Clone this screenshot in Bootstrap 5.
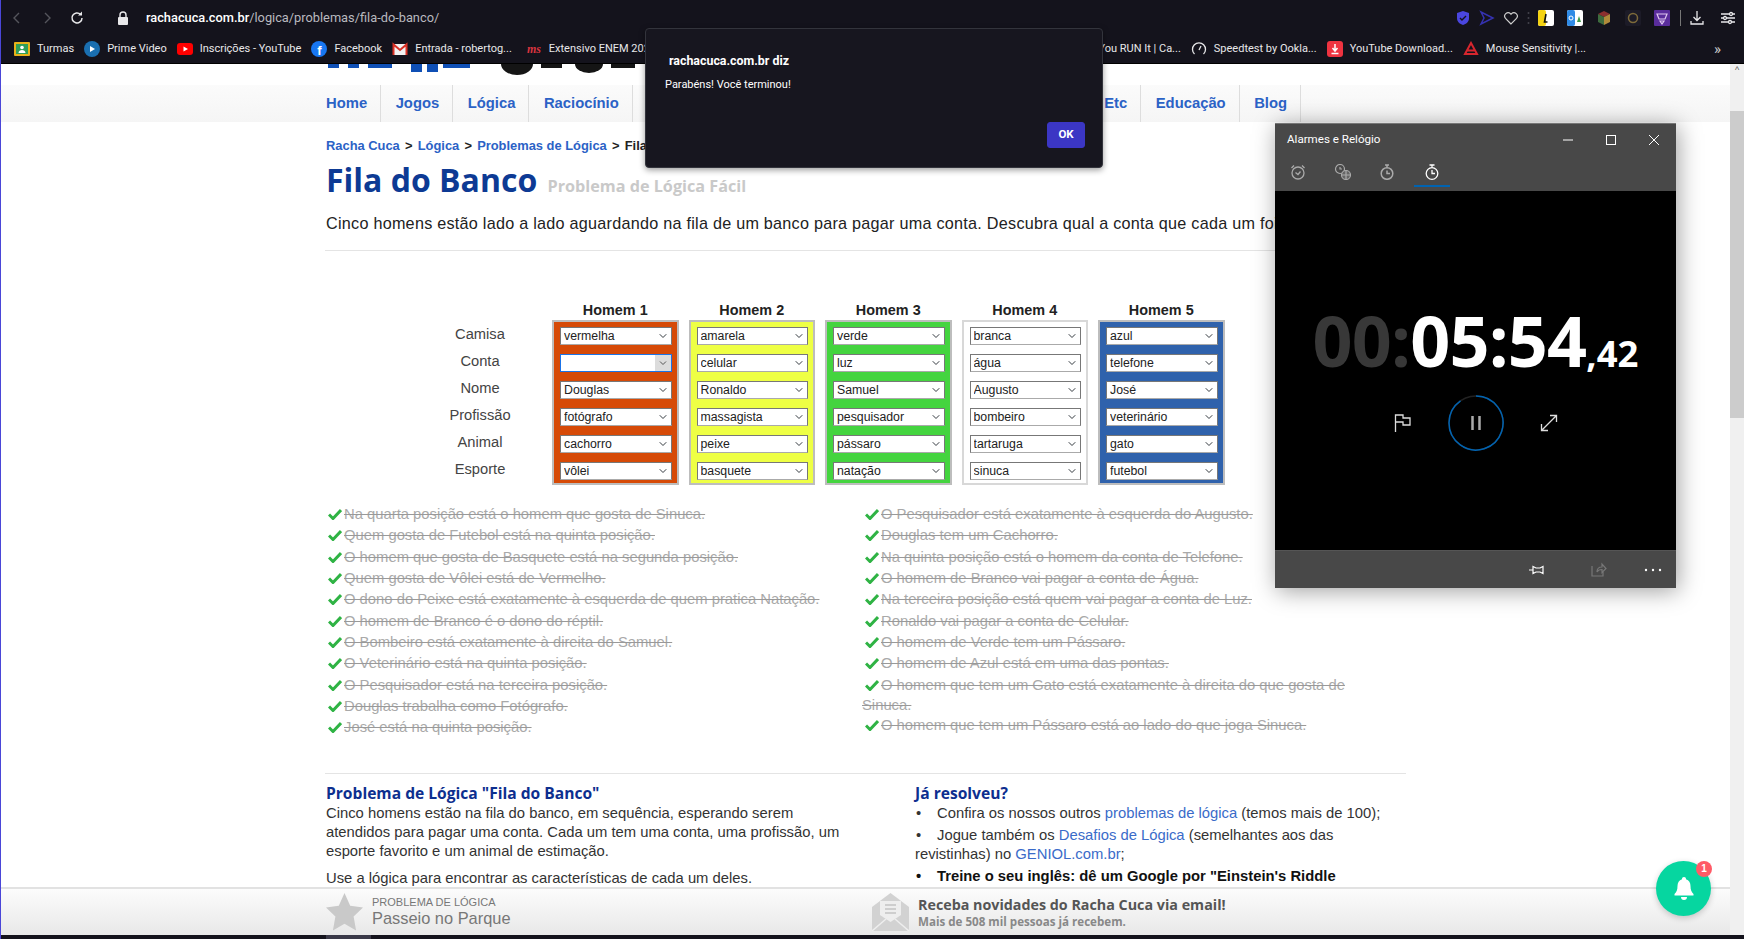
<!DOCTYPE html>
<html lang="pt-BR">
<head>
  <title>Fila do Banco</title>
  <link rel="stylesheet" href="https://cdn.jsdelivr.net/npm/bootstrap@5.3.0/dist/css/bootstrap.min.css">
  <style>
    html, body { height: 939px; overflow: hidden; }
    body { background: #14131c; font-family: "Liberation Sans", Arial, sans-serif; color: #222; border-left: 1px solid #4a46d8; position: relative; }

    /* browser chrome */
    .chrome { height: 64px; background: #14131c; color: #e8e8ea; font-family: Roboto, sans-serif; border-bottom: 1px solid #000; }
    .tool-row { height: 35px; padding-left: 8px; }
    .tool-ico { width: 16px; height: 16px; flex: none; }
    .tool-gap { margin-left: 14px; }
    .url-text { font-size: 12.8px; margin-left: 15px; color: #b9b9bf; }
    .url-text b { font-weight: 500; color: #fff; }
    .ext-group { margin-left: auto; padding-right: 8px; gap: 8px; }
    .ext-wide { margin-left: 5px; }
    .ext-sep { width: 1px; height: 16px; margin-left: 2px; background: #777; }
    .ext-end { margin-left: 7px; }
    .book-row { height: 28px; font-size: 11px; padding-left: 13px; padding-right: 23px; }
    .book-item { display: flex; align-items: center; gap: 7px; margin-right: 10px; white-space: nowrap; }
    .book-more { margin-left: 118px; font-size: 15px; color: #ccc; }

    /* page */
    .view-wrap { height: 871px; background: #fff; }
    .page-col { flex: 1; min-width: 0; display: flex; flex-direction: column; }
    .page-scroll { flex: 1; overflow: hidden; min-height: 0; }
    .logo-clip { height: 21px; padding-left: 324px; }
    .site-nav { height: 37px; padding-left: 324px; background: linear-gradient(#fbfbfb, #f5f5f5); }
    .site-nav .nav-link { padding: 0 13px 0 14.5px; height: 37px; line-height: 37px; font-size: 14.8px; font-weight: 700; color: #2b62c6; border-right: 1px solid #ddd; }
    .site-nav li:first-child .nav-link { padding-left: 1px; }
    .nav-spacer { width: 457px; height: 37px; border-right: 1px solid #ddd; }
    .site-wrap { margin-left: 324px; width: 1081px; }
    .crumbs { margin-top: 14px; height: 20px; line-height: 20px; font-size: 12.9px; font-weight: 700; padding-left: 1px; }
    .crumbs a { color: #2b62c6; text-decoration: none; }
    .crumbs span { margin: 0 1.6px; }
    .page-title { margin: 2px 0 0; height: 44px; line-height: 44px; font-family: "Open Sans", sans-serif; font-weight: 700; font-size: 32px; color: #0d3a94; padding-left: 1px; }
    .page-title span { font-size: 16.2px; color: #c9c9c9; margin-left: 2px; }
    .intro { margin: 9px 0 15px; line-height: 24px; font-size: 16.2px; letter-spacing: .25px; white-space: nowrap; padding-left: 1px; color: #222; overflow: hidden; }
    .rule { height: 1px; background: #e4e4e4; }

    .puzzle { margin-top: 49px; margin-left: 105px; gap: 10px; }
    .label-col { width: 100px; padding-top: 25px; margin-right: 12px; gap: 9px; }
    .label-col div { height: 18px; line-height: 18px; text-align: center; font-size: 14.7px; color: #444; }
    .man-col { width: 126.5px; }
    .man-head { height: 20px; line-height: 20px; text-align: center; font-size: 14.4px; font-weight: 700; color: #222; }
    .man-box { height: 165px; border: 2px solid #bdbdbd; padding: 5px 5px 5px 6px; gap: 9px; }
    .shirt-red { background: #d64a07; }
    .shirt-yellow { background: #eeff44; }
    .shirt-green { background: #44d43f; }
    .shirt-white { background: #fff; border-color: #d8d8d8; }
    .shirt-blue { background: #2f62ac; }
    .pick { height: 18px; min-height: 18px; padding: 0 14px 0 3px; font-size: 12.3px; line-height: 15px; color: #222; border: 1px solid #777; border-bottom-color: #aaa; border-radius: 0; background-position: right 3px center; background-size: 10px 8px; font-family: "Liberation Sans", Arial, sans-serif; }
    .pick-open { border: 1px solid #1a73e8; background: url("data:image/svg+xml,%3csvg xmlns='http://www.w3.org/2000/svg' viewBox='0 0 16 16'%3e%3cpath fill='none' stroke='%23555' stroke-width='2' d='m2 5 6 6 6-6'/%3e%3c/svg%3e") right 3px center / 10px 8px no-repeat, linear-gradient(#dcdcdc, #dcdcdc) right / 16px 100% no-repeat, #fff; }

    .clues { margin-top: 19px; }
    .clue-col { font-size: 14.8px; line-height: 21.33px; color: #a9a9a9; }
    .clue-left { width: 537px; }
    .clue-right { width: 500px; }
    .clue-col div { text-decoration: line-through; text-decoration-color: #999; }
    .clue-col .clue-wrap { line-height: 20px; }
    .tick { width: 14px; height: 12px; margin: 0 2px 0 3px; vertical-align: -1px; }

    .rule-low { margin-top: 34px; }
    .info-row { margin-top: 9px; }
    .info-left { width: 525px; margin-right: 65px; padding-left: 1px; }
    .info-right { width: 491px; }
    .info-head { margin: 0; height: 21px; line-height: 20px; font-family: "Open Sans", sans-serif; font-weight: 700; font-size: 15.6px; color: #0d2f8f; }
    .info-text { font-size: 14.8px; line-height: 19px; color: #333; margin: 0 0 8px; }
    .info-list { margin: 0; padding: 0; list-style: none; font-size: 14.8px; line-height: 19px; color: #333; }
    .info-list li { margin-bottom: 3px; }
    .info-list a { color: #3a6bc9; text-decoration: none; }
    .info-list i { font-style: normal; display: inline-block; width: 22px; padding-left: 1px; }
    .info-list .strong-tip { font-weight: 700; color: #111; }

    /* bottom bar */
    .promo-bar { height: 48px; flex: none; border-top: 2px solid #e2e2e2; background: linear-gradient(#fcfcfc, #e8e8e8); padding-left: 325px; color: #777; }
    .promo-one { width: 546px; gap: 9px; }
    .promo-small { font-size: 11px; line-height: 13px; color: #777; }
    .promo-big { font-size: 16.4px; line-height: 19px; color: #777; }
    .promo-two { gap: 9px; font-family: "Open Sans", sans-serif; font-weight: 700; }
    .promo-title { font-size: 14.3px; line-height: 19px; color: #555; }
    .promo-sub { font-size: 11.6px; line-height: 16px; color: #888; }
    .rail { width: 14px; flex: none; background: #f0f0f0; }
    .rail-top { height: 47px; font-size: 9px; text-align: center; color: #555; }
    .rail-thumb { height: 307px; background: #ccc; }
    .strip { height: 4px; background: #14131c; padding-left: 325px; }
    .strip div { width: 45px; height: 4px; background: #3a3948; }

    /* alert dialog */
    .js-alert { position: absolute; left: 644px; top: 28px; width: 458px; height: 140px; background: #17161f; border: 1px solid #33343c; border-radius: 4px; color: #fff; font-family: Roboto, sans-serif; box-shadow: 0 2px 6px rgba(0,0,0,.4); }
    .js-alert h6 { position: absolute; left: 23px; top: 25px; margin: 0; font-size: 12.4px; font-weight: 700; }
    .js-alert p { position: absolute; left: 19px; top: 48px; margin: 0; font-size: 11px; }
    .ok-btn { position: absolute; left: 401px; top: 93px; width: 38px; height: 26px; padding: 0; background: #3b36c4; border-color: #3b36c4; color: #fff; font-size: 11.5px; font-weight: 700; border-radius: 3px; }

    /* clock window */
    .clock-win { position: absolute; left: 1274px; top: 123px; width: 401px; height: 465px; background: #484848; box-shadow: 2px 3px 22px rgba(0,0,0,.38); border-top: 1px solid #777; color: #fff; }
    .clock-title { height: 32px; padding-left: 12px; font-family: Roboto, sans-serif; font-size: 11.6px; }
    .win-btns { margin-left: auto; gap: 31px; padding-right: 16px; }
    .clock-tabs { height: 35px; padding-left: 1px; }
    .clock-tab { width: 44.5px; height: 31px; text-align: center; padding-top: 8px; line-height: 0; }
    .clock-tab.is-on { width: 36px; margin-left: 4px; border-bottom: 2px solid #0063b1; }
    .clock-body { height: 359px; background: #000; padding-top: 119px; }
    .clock-time { height: 60px; line-height: 60px; text-align: center; font-family: "Open Sans", sans-serif; font-weight: 700; font-size: 70px; letter-spacing: -.8px; white-space: nowrap; }
    .clock-time .dim { color: #383838; }
    .clock-time small { font-size: 36.5px; letter-spacing: 0; }
    .clock-ctrls { margin-top: 25px; gap: 36px; }
    .clock-foot { height: 38px; border-top: 1px solid #555; gap: 37px; padding-right: 14px; }
    .pin-ico { margin-right: 9px; }

    /* notification bell */
    .bell-fab { position: absolute; left: 1655px; top: 861px; width: 55px; height: 55px; border-radius: 50%; background: #06d6a0; box-shadow: 0 2px 6px rgba(0,0,0,.2); }
    .bell-count { position: absolute; right: -1px; top: 0; width: 16px; height: 16px; line-height: 16px; border-radius: 50%; background: #ff5a66; color: #fff; font-size: 10px; font-weight: 700; text-align: center; }
  </style>
</head>
<body>

  <!-- browser toolbar -->
  <div class="chrome">
    <div class="tool-row d-flex align-items-center">
      <svg class="tool-ico" viewBox="0 0 16 16" fill="none" stroke="#55555c" stroke-width="1.4"><path d="M10 3 5 8l5 5"/></svg>
      <svg class="tool-ico tool-gap" viewBox="0 0 16 16" fill="none" stroke="#55555c" stroke-width="1.4"><path d="m6 3 5 5-5 5"/></svg>
      <svg class="tool-ico tool-gap" viewBox="0 0 16 16" fill="none" stroke="#e8e8ea" stroke-width="1.5"><path d="M13 8a5 5 0 1 1-1.5-3.6"/><path d="M13 1.5v4h-4" fill="#e8e8ea" stroke="none"/></svg>
      <svg class="tool-ico" style="margin-left:30px" viewBox="0 0 16 16" fill="#e8e8ea"><rect x="3" y="7" width="10" height="8" rx="1"/><path d="M5 7V5a3 3 0 0 1 6 0v2" fill="none" stroke="#e8e8ea" stroke-width="1.4"/></svg>
      <div class="url-text"><b>rachacuca.com.br</b>/logica/problemas/fila-do-banco/</div>
      <div class="ext-group d-flex align-items-center">
        <svg class="tool-ico" viewBox="0 0 16 16"><path d="M8 1l6 2v5c0 4-3 6-6 7-3-1-6-3-6-7V3z" fill="#4a46e0"/><path d="m5 8 2 2 4-4" fill="none" stroke="#14131c" stroke-width="1.4"/></svg>
        <svg class="tool-ico" viewBox="0 0 16 16" fill="none" stroke="#3532b0" stroke-width="1.5"><path d="M2 2l12 6-12 6 3-6z"/></svg>
        <svg class="tool-ico" viewBox="0 0 16 16" fill="none" stroke="#cfcfcf" stroke-width="1.2"><path d="M8 14 2.500 8.300a3.400 3.400 0 0 1 5-4.600l.5.600.5-.6a3.400 3.400 0 0 1 5 4.600z"/></svg>
        <svg width="3" height="14" viewBox="0 0 3 14" fill="#44444c"><circle cx="1.500" cy="2" r="1"/><circle cx="1.500" cy="7" r="1"/><circle cx="1.500" cy="12" r="1"/></svg>
        <svg class="tool-ico" viewBox="0 0 16 16"><rect width="16" height="16" rx="2" fill="#fff"/><rect width="8" height="16" rx="2" fill="#f5d312"/><path d="M8 4 6.500 12h3" fill="none" stroke="#111" stroke-width="1.600"/></svg>
        <svg class="tool-ico ext-wide" viewBox="0 0 16 16"><rect width="16" height="16" rx="2" fill="#fff"/><rect width="8" height="16" rx="2" fill="#2f8be6"/><circle cx="4" cy="8" r="2" fill="none" stroke="#fff"/><path d="m12 6 2 6h-4z" fill="#3c9a4a"/></svg>
        <svg class="tool-ico ext-wide" viewBox="0 0 16 16"><path d="M8 1l6 3-6 3-6-3z" fill="#8c2f2f"/><path d="M2 4l6 3v8l-6-3z" fill="#3d6b3d"/><path d="M14 4 8 7v8l6-3z" fill="#b08a3a"/></svg>
        <svg class="tool-ico ext-wide" viewBox="0 0 16 16"><rect width="16" height="16" rx="2" fill="#1c1b27"/><circle cx="8" cy="8" r="4.500" fill="none" stroke="#7d6a3a" stroke-width="1.500"/></svg>
        <svg class="tool-ico ext-wide" viewBox="0 0 16 16"><rect width="16" height="16" rx="1" fill="#5a2d9c"/><path d="M3 4h10l-2 5H5zM6 11h4l-2 3z" fill="none" stroke="#e0c8f0" stroke-width="1.200"/></svg>
        <span class="d-inline-block ext-sep"></span>
        <svg class="tool-ico" viewBox="0 0 16 16" fill="none" stroke="#e8e8ea" stroke-width="1.300"><path d="M8 1v9M4.500 7 8 10.500 11.500 7M2 11v3h12v-3"/></svg>
        <svg class="tool-ico ext-end" viewBox="0 0 16 16" fill="none" stroke="#e8e8ea" stroke-width="1.300"><path d="M1 4h14M1 8h14M1 12h14"/><circle cx="11" cy="4" r="1.500" fill="#14131c"/><circle cx="5" cy="8" r="1.500" fill="#14131c"/><circle cx="10" cy="12" r="1.500" fill="#14131c"/></svg>
      </div>
    </div>
    <div class="book-row d-flex align-items-center">
      <div class="book-item"><svg class="tool-ico" viewBox="0 0 16 16"><rect y="1" width="16" height="14" rx="1" fill="#e8b21a"/><rect x="2" y="3" width="12" height="10" fill="#2f9e58"/><circle cx="8" cy="6.500" r="1.800" fill="#fff"/><path d="M4.500 12c0-4 7-4 7 0z" fill="#fff"/></svg>Turmas</div>
      <div class="book-item"><svg class="tool-ico" viewBox="0 0 16 16"><circle cx="8" cy="8" r="8" fill="#1a6fb0"/><path d="M6 5l5 3-5 3z" fill="#fff"/></svg>Prime Video</div>
      <div class="book-item"><svg class="tool-ico" viewBox="0 0 16 16"><rect y="2" width="16" height="12" rx="3" fill="#f00"/><path d="M6.500 5.500 11 8l-4.500 2.500z" fill="#fff"/></svg>Inscrições - YouTube</div>
      <div class="book-item"><svg class="tool-ico" viewBox="0 0 16 16"><circle cx="8" cy="8" r="8" fill="#1877f2"/><text x="8.500" y="14" font-size="13" font-weight="700" fill="#fff" text-anchor="middle" font-family="Liberation Sans">f</text></svg>Facebook</div>
      <div class="book-item"><svg class="tool-ico" viewBox="0 0 16 16"><rect x="1" y="3" width="14" height="11" fill="#f2f2f2"/><path d="M1.500 14V3.500L8 9l6.500-5.500V14" fill="none" stroke="#d93025" stroke-width="2"/></svg>Entrada - robertog...</div>
      <div class="book-item ms-1"><svg class="tool-ico" viewBox="0 0 16 16"><text x="8" y="12" font-size="12" font-style="italic" font-weight="700" fill="#d9333f" text-anchor="middle" font-family="Liberation Serif">ms</text></svg>Extensivo ENEM 2021</div>
      <div class="book-item ms-auto">Can You RUN It | Ca...</div>
      <div class="book-item"><svg class="tool-ico" viewBox="0 0 16 16" fill="none" stroke="#e8e8ea" stroke-width="1.300"><path d="M3.500 13a6.500 6.500 0 1 1 9 0M8 9l2-4"/></svg>Speedtest by Ookla...</div>
      <div class="book-item"><svg class="tool-ico" viewBox="0 0 16 16"><rect width="16" height="16" rx="3" fill="#ef3340"/><path d="M8 3v6M5.500 7 8 10l2.500-3M4.500 12.500h7" fill="none" stroke="#fff" stroke-width="1.500"/></svg>YouTube Download...</div>
      <div class="book-item"><svg class="tool-ico" viewBox="0 0 16 16" fill="none" stroke="#d7262e" stroke-width="2"><path d="M8 2 2 13h12zM4 9.500h8"/></svg>Mouse Sensitivity |...</div>
      <div class="book-more">»</div>
    </div>
  </div>

  <!-- page area -->
  <div class="view-wrap d-flex">
    <div class="page-col">
      <div class="page-scroll">
        <div class="logo-clip">
          <svg width="320" height="11" viewBox="0 0 320 11" class="d-block">
            <g fill="#0f4fb5"><rect x="3" width="11" height="4"/><rect x="23" width="11" height="4"/><rect x="43" width="24" height="4"/><rect x="86" width="11" height="8"/><rect x="102" width="11" height="8"/><rect x="118" width="27" height="4"/></g>
            <g fill="#151515"><path d="M176 0a16 11 0 0 0 32 0z"/><rect x="216" width="21" height="4"/><path d="M250 0a14 9 0 0 0 28 0z"/><rect x="286" width="24" height="4"/></g>
          </svg>
        </div>
        <ul class="nav site-nav">
          <li class="nav-item"><a class="nav-link" href="#">Home</a></li>
          <li class="nav-item"><a class="nav-link" href="#">Jogos</a></li>
          <li class="nav-item"><a class="nav-link" href="#">Lógica</a></li>
          <li class="nav-item"><a class="nav-link" href="#">Raciocínio</a></li>
          <li class="nav-item nav-spacer"></li>
          <li class="nav-item"><a class="nav-link" href="#">Etc</a></li>
          <li class="nav-item"><a class="nav-link" href="#">Educação</a></li>
          <li class="nav-item"><a class="nav-link" href="#">Blog</a></li>
        </ul>

        <div class="site-wrap">
          <div class="crumbs"><a href="#">Racha Cuca</a><span> &gt; </span><a href="#">Lógica</a><span> &gt; </span><a href="#">Problemas de Lógica</a><span> &gt; </span>Fila do Banco</div>
          <h1 class="page-title">Fila do Banco <span>Problema de Lógica Fácil</span></h1>
          <p class="intro">Cinco homens estão lado a lado aguardando na fila de um banco para pagar uma conta. Descubra qual a conta que cada um foi pagar.</p>
          <div class="rule"></div>

          <div class="puzzle d-flex">
            <div class="label-col d-flex flex-column">
              <div>Camisa</div><div>Conta</div><div>Nome</div><div>Profissão</div><div>Animal</div><div>Esporte</div>
            </div>
            <div class="man-col">
              <div class="man-head">Homem 1</div>
              <div class="man-box shirt-red d-flex flex-column">
                <select class="form-select pick"><option>vermelha</option></select>
                <select class="form-select pick pick-open"><option></option></select>
                <select class="form-select pick"><option>Douglas</option></select>
                <select class="form-select pick"><option>fotógrafo</option></select>
                <select class="form-select pick"><option>cachorro</option></select>
                <select class="form-select pick"><option>vôlei</option></select>
              </div>
            </div>
            <div class="man-col">
              <div class="man-head">Homem 2</div>
              <div class="man-box shirt-yellow d-flex flex-column">
                <select class="form-select pick"><option>amarela</option></select>
                <select class="form-select pick"><option>celular</option></select>
                <select class="form-select pick"><option>Ronaldo</option></select>
                <select class="form-select pick"><option>massagista</option></select>
                <select class="form-select pick"><option>peixe</option></select>
                <select class="form-select pick"><option>basquete</option></select>
              </div>
            </div>
            <div class="man-col">
              <div class="man-head">Homem 3</div>
              <div class="man-box shirt-green d-flex flex-column">
                <select class="form-select pick"><option>verde</option></select>
                <select class="form-select pick"><option>luz</option></select>
                <select class="form-select pick"><option>Samuel</option></select>
                <select class="form-select pick"><option>pesquisador</option></select>
                <select class="form-select pick"><option>pássaro</option></select>
                <select class="form-select pick"><option>natação</option></select>
              </div>
            </div>
            <div class="man-col">
              <div class="man-head">Homem 4</div>
              <div class="man-box shirt-white d-flex flex-column">
                <select class="form-select pick"><option>branca</option></select>
                <select class="form-select pick"><option>água</option></select>
                <select class="form-select pick"><option>Augusto</option></select>
                <select class="form-select pick"><option>bombeiro</option></select>
                <select class="form-select pick"><option>tartaruga</option></select>
                <select class="form-select pick"><option>sinuca</option></select>
              </div>
            </div>
            <div class="man-col">
              <div class="man-head">Homem 5</div>
              <div class="man-box shirt-blue d-flex flex-column">
                <select class="form-select pick"><option>azul</option></select>
                <select class="form-select pick"><option>telefone</option></select>
                <select class="form-select pick"><option>José</option></select>
                <select class="form-select pick"><option>veterinário</option></select>
                <select class="form-select pick"><option>gato</option></select>
                <select class="form-select pick"><option>futebol</option></select>
              </div>
            </div>
          </div>

          <svg width="0" height="0" class="position-absolute"><symbol id="tick-mark" viewBox="0 0 14 12"><path d="M1 6.500 5 10.500 13 2" fill="none" stroke="#2fb344" stroke-width="3"/></symbol></svg>
          <div class="clues d-flex">
            <div class="clue-col clue-left">
              <div><svg class="tick"><use href="#tick-mark"/></svg>Na quarta posição está o homem que gosta de Sinuca.</div>
              <div><svg class="tick"><use href="#tick-mark"/></svg>Quem gosta de Futebol está na quinta posição.</div>
              <div><svg class="tick"><use href="#tick-mark"/></svg>O homem que gosta de Basquete está na segunda posição.</div>
              <div><svg class="tick"><use href="#tick-mark"/></svg>Quem gosta de Vôlei está de Vermelho.</div>
              <div><svg class="tick"><use href="#tick-mark"/></svg>O dono do Peixe está exatamente à esquerda de quem pratica Natação.</div>
              <div><svg class="tick"><use href="#tick-mark"/></svg>O homem de Branco é o dono do réptil.</div>
              <div><svg class="tick"><use href="#tick-mark"/></svg>O Bombeiro está exatamente à direita do Samuel.</div>
              <div><svg class="tick"><use href="#tick-mark"/></svg>O Veterinário está na quinta posição.</div>
              <div><svg class="tick"><use href="#tick-mark"/></svg>O Pesquisador está na terceira posição.</div>
              <div><svg class="tick"><use href="#tick-mark"/></svg>Douglas trabalha como Fotógrafo.</div>
              <div><svg class="tick"><use href="#tick-mark"/></svg>José está na quinta posição.</div>
            </div>
            <div class="clue-col clue-right">
              <div><svg class="tick"><use href="#tick-mark"/></svg>O Pesquisador está exatamente à esquerda do Augusto.</div>
              <div><svg class="tick"><use href="#tick-mark"/></svg>Douglas tem um Cachorro.</div>
              <div><svg class="tick"><use href="#tick-mark"/></svg>Na quinta posição está o homem da conta de Telefone.</div>
              <div><svg class="tick"><use href="#tick-mark"/></svg>O homem de Branco vai pagar a conta de Água.</div>
              <div><svg class="tick"><use href="#tick-mark"/></svg>Na terceira posição está quem vai pagar a conta de Luz.</div>
              <div><svg class="tick"><use href="#tick-mark"/></svg>Ronaldo vai pagar a conta de Celular.</div>
              <div><svg class="tick"><use href="#tick-mark"/></svg>O homem de Verde tem um Pássaro.</div>
              <div><svg class="tick"><use href="#tick-mark"/></svg>O homem de Azul está em uma das pontas.</div>
              <div class="clue-wrap"><svg class="tick"><use href="#tick-mark"/></svg>O homem que tem um Gato está exatamente à direita do que gosta de Sinuca.</div>
              <div><svg class="tick"><use href="#tick-mark"/></svg>O homem que tem um Pássaro está ao lado do que joga Sinuca.</div>
            </div>
          </div>

          <div class="rule rule-low"></div>
          <div class="info-row d-flex">
            <div class="info-left">
              <h2 class="info-head">Problema de Lógica "Fila do Banco"</h2>
              <p class="info-text">Cinco homens estão na fila do banco, em sequência, esperando serem atendidos para pagar uma conta. Cada um tem uma conta, uma profissão, um esporte favorito e um animal de estimação.</p>
              <p class="info-text">Use a lógica para encontrar as características de cada um deles.</p>
            </div>
            <div class="info-right">
              <h2 class="info-head">Já resolveu?</h2>
              <ul class="info-list">
                <li><i>•</i>Confira os nossos outros <a href="#">problemas de lógica</a> (temos mais de 100);</li>
                <li><i>•</i>Jogue também os <a href="#">Desafios de Lógica</a> (semelhantes aos das<br>revistinhas) no <a href="#">GENIOL.com.br</a>;</li>
                <li class="strong-tip"><i>•</i>Treine o seu inglês: dê um Google por "Einstein's Riddle</li>
              </ul>
            </div>
          </div>
        </div>
      </div>

      <div class="promo-bar d-flex align-items-center">
        <div class="promo-one d-flex align-items-center">
          <svg width="37" height="38" viewBox="0 0 37 38"><path d="M18.500 0l5.700 12.800 12.800 1.600-9.400 9.200 2.500 14-11.600-6.800L6.900 37.600l2.500-14L0 14.400l12.800-1.600z" fill="#c9c9c9"/></svg>
          <div>
            <div class="promo-small">PROBLEMA DE LÓGICA</div>
            <div class="promo-big">Passeio no Parque</div>
          </div>
        </div>
        <div class="promo-two d-flex align-items-center">
          <svg width="37" height="38" viewBox="0 0 37 38"><path d="M18.500 0 37 14v24H0V14z" fill="#d2d2d2"/><path d="M8 8h21v14l-10.500 7L8 22z" fill="#eee"/><path d="M13 12h11M13 16h11M13 20h11" stroke="#c4c4c4" stroke-width="1.500"/><path d="M0 38l14-12M37 38 23 26" stroke="#eee" stroke-width="1.500"/></svg>
          <div>
            <div class="promo-title">Receba novidades do Racha Cuca via email!</div>
            <div class="promo-sub">Mais de 508 mil pessoas já recebem.</div>
          </div>
        </div>
      </div>
    </div>

    <div class="rail">
      <div class="rail-top">^</div>
      <div class="rail-thumb"></div>
    </div>
  </div>
  <div class="strip"><div></div></div>

  <!-- alert of the page -->
  <div class="js-alert">
    <h6>rachacuca.com.br diz</h6>
    <p>Parabéns! Você terminou!</p>
    <button class="btn ok-btn">OK</button>
  </div>

  <!-- clock app -->
  <div class="clock-win">
    <div class="clock-title d-flex align-items-center">
      Alarmes e Relógio
      <div class="win-btns d-flex align-items-center">
        <svg width="12" height="12" viewBox="0 0 12 12"><path d="M1 6h10" stroke="#fff"/></svg>
        <svg width="12" height="12" viewBox="0 0 12 12" fill="none"><rect x="1.500" y="1.500" width="9" height="9" stroke="#fff"/></svg>
        <svg width="12" height="12" viewBox="0 0 12 12"><path d="M1 1l10 10M11 1 1 11" stroke="#fff"/></svg>
      </div>
    </div>
    <div class="clock-tabs d-flex">
      <div class="clock-tab"><svg width="16" height="16" viewBox="0 0 16 16" fill="none" stroke="#aaa" stroke-width="1.300"><circle cx="8" cy="9" r="6"/><path d="M1.500 4 4 1.500M14.500 4 12 1.500M5.500 8.500 8 10.500l2.500-3"/></svg></div>
      <div class="clock-tab"><svg width="17" height="16" viewBox="0 0 17 16" fill="none" stroke="#aaa" stroke-width="1.200"><circle cx="6" cy="5" r="4.500"/><path d="M6 3v2h2"/><circle cx="12" cy="11" r="4.500" fill="#666"/><path d="M7.500 11h9M12 6.500v9"/></svg></div>
      <div class="clock-tab"><svg width="16" height="16" viewBox="0 0 16 16" fill="none" stroke="#aaa" stroke-width="1.500"><path d="M6 1h4M8 1v2"/><circle cx="8" cy="9.500" r="5.800"/><path d="M8 6.500v3h3" /></svg></div>
      <div class="clock-tab is-on"><svg width="16" height="16" viewBox="0 0 16 16" fill="none" stroke="#fff" stroke-width="1.300"><path d="M5.500 1h5M8 1v2"/><circle cx="8" cy="9.500" r="5.800"/><path d="M8 6v3.500h3"/></svg></div>
    </div>
    <div class="clock-body">
      <div class="clock-time"><span class="dim">00:</span>05:54<small>,42</small></div>
      <div class="clock-ctrls d-flex justify-content-center align-items-center">
        <svg width="18" height="18" viewBox="0 0 18 18" fill="none" stroke="#ddd" stroke-width="1.300"><path d="M1.500 18V1H9v3h7v7H9V8H1.500"/></svg>
        <svg width="56" height="56" viewBox="0 0 56 56" fill="none"><circle cx="28" cy="28" r="27" stroke="#222" stroke-width="1.500"/><path d="M28 1a27 27 0 1 1-15.500 4.900" stroke="#0063b1" stroke-width="1.500"/><path d="M24.500 21v14M31.500 21v14" stroke="#aaa" stroke-width="2.500"/></svg>
        <svg width="18" height="18" viewBox="0 0 18 18" fill="none" stroke="#ddd" stroke-width="1.300"><path d="M1.500 16.500l15-15M10 1.500h6.500V8M8 16.500H1.500V10"/></svg>
      </div>
    </div>
    <div class="clock-foot d-flex justify-content-end align-items-center">
      <svg class="pin-ico" width="16" height="12" viewBox="0 0 16 12" fill="none" stroke="#fff" stroke-width="1.200"><path d="M0 6h4M4 2.500l3 1.500h4l3-1.500v7l-3-1.500H7L4 9.500z"/></svg>
      <svg width="16" height="15" viewBox="0 0 16 15" fill="none" stroke="#777" stroke-width="1.200"><path d="M1 4v10h11V9M6 10c0-4 3-5 5-5V2l4 4.500-4 4V7.500c-2 0-4 .5-5 2.500z"/></svg>
      <svg width="18" height="4" viewBox="0 0 18 4" fill="#fff"><circle cx="2" cy="2" r="1.200"/><circle cx="9" cy="2" r="1.200"/><circle cx="16" cy="2" r="1.200"/></svg>
    </div>
  </div>

  <!-- notification bell -->
  <div class="bell-fab d-flex align-items-center justify-content-center">
    <svg width="20" height="23" viewBox="0 0 20 23" fill="#fff"><path d="M10 0a2 2 0 0 1 2 2.200c3 .8 4.500 3.500 4.500 6.800 0 4 1 6 3 8v1.500H.5V17c2-2 3-4 3-8 0-3.300 1.500-6 4.500-6.800A2 2 0 0 1 10 0zM7 20h6a3 3 0 0 1-6 0z"/></svg>
    <span class="bell-count">1</span>
  </div>

  <script src="https://cdn.jsdelivr.net/npm/bootstrap@5.3.0/dist/js/bootstrap.bundle.min.js"></script>
</body>
</html>
